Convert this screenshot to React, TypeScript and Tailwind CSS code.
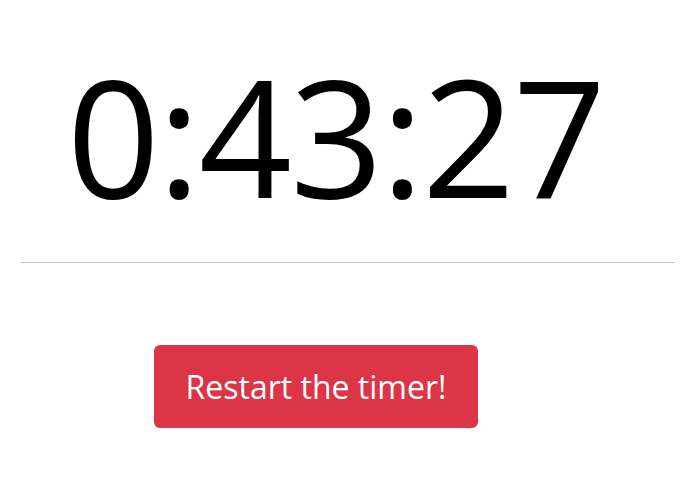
export default function App() {
  return (
    <div className="w-[695px] h-[494px] bg-white" style={{ fontFamily: '"Open Sans", "Noto Sans", sans-serif' }}>
      <div className="pt-[35px] flex justify-center">
        <div className="text-[163px] leading-[200px] text-black tracking-[-2px] pr-[24px]">0:43:27</div>
      </div>
      <div className="mx-[21px] mt-[27px] border-t border-[#bfbfbf]"></div>
      <div className="mt-[82px] ml-[154px]">
        <button className="w-[324px] h-[83px] rounded-[6px] bg-[#dc3545] text-white text-[32px]">Restart the timer!</button>
      </div>
    </div>
  );
}
